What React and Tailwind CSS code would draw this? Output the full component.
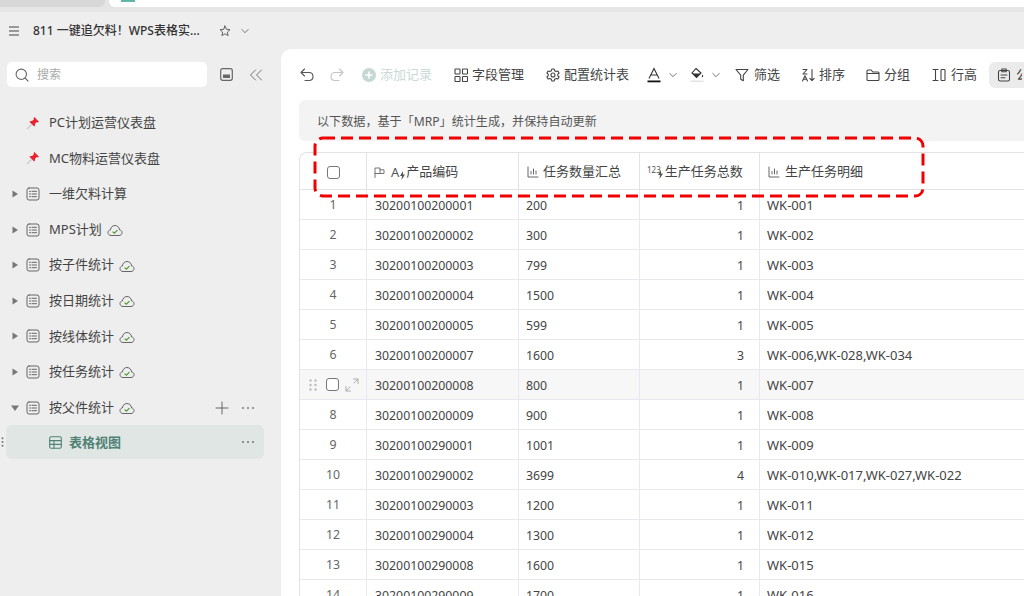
import React from "react";

const font = { fontFamily: '"Noto Sans","Noto Sans CJK SC",sans-serif' };

const S = ({ w = 16, h = 16, vb = "0 0 16 16", children, className = "", sw = 1.1, color = "currentColor" }) => (
  <svg width={w} height={h} viewBox={vb} fill="none" stroke={color} strokeWidth={sw} strokeLinecap="round" strokeLinejoin="round" className={`shrink-0 ${className}`}>
    {children}
  </svg>
);

const Pin = () => (
  <svg width="14" height="14" viewBox="0 0 14 14" className="shrink-0">
    <path d="M1 13 L5.5 8.5" stroke="#c9c9c9" strokeWidth="1.2" />
    <path d="M8.3 1 L13 5.7 L11.8 6.4 L10.8 6 L8.9 8 C9.2 9 8.9 10 8.2 10.6 L3.4 5.8 C4 5.1 5 4.8 6 5.1 L8 3.2 L7.6 2.2 Z" fill="#e8222e" />
  </svg>
);

const ListIcon = () => (
  <S w={14} h={14} vb="0 0 14 14" color="#666" sw={1}>
    <rect x="1" y="1" width="12" height="12" rx="2" />
    <path d="M3.5 4.3h1M6 4.3h4.5M3.5 7h1M6 7h4.5M3.5 9.7h1M6 9.7h4.5" />
  </S>
);

const Cloud = () => (
  <svg width="16" height="13" viewBox="0 0 16 13" fill="none" className="shrink-0 ml-[5px] mt-[2px]">
    <path d="M4 11.5 C2 11.5 1 10 1 8.6 C1 7.2 2 6 3.4 6 C3.7 3.2 5.6 1.5 8 1.5 C10.4 1.5 12.3 3.2 12.6 6 C14 6 15 7.2 15 8.6 C15 10 14 11.5 12 11.5 Z" stroke="#666" strokeWidth="1" />
    <path d="M5.6 7.6 L7.4 9.2 L10.4 6.2" stroke="#4c9a2a" strokeWidth="1.2" />
  </svg>
);

const Arrow = ({ down }) => (
  <svg width="8" height="8" viewBox="0 0 8 8" className="shrink-0">
    <path d={down ? "M0 1.5 H8 L4 7 Z" : "M1.5 0.5 L7 4 L1.5 7.5 Z"} fill="#777" />
  </svg>
);

const Dots = ({ cls = "" }) => (
  <svg width="14" height="4" viewBox="0 0 14 4" className={`shrink-0 ${cls}`}>
    <circle cx="2" cy="2" r="1" fill="#777" /><circle cx="7" cy="2" r="1" fill="#777" /><circle cx="12" cy="2" r="1" fill="#777" />
  </svg>
);

const Chevron = ({ cls = "" }) => (
  <S w={8} h={8} vb="0 0 8 8" color="#777" sw={1} className={cls}><path d="M0.8 2.5 L4 5.7 L7.2 2.5" /></S>
);

const side = [
  ["一维欠料计算", false],
  ["MPS计划", true],
  ["按子件统计", true],
  ["按日期统计", true],
  ["按线体统计", true],
  ["按任务统计", true],
];

const rows = [
  ["1", "30200100200001", "200", "1", "WK-001"],
  ["2", "30200100200002", "300", "1", "WK-002"],
  ["3", "30200100200003", "799", "1", "WK-003"],
  ["4", "30200100200004", "1500", "1", "WK-004"],
  ["5", "30200100200005", "599", "1", "WK-005"],
  ["6", "30200100200007", "1600", "3", "WK-006,WK-028,WK-034"],
  ["7", "30200100200008", "800", "1", "WK-007"],
  ["8", "30200100200009", "900", "1", "WK-008"],
  ["9", "30200100290001", "1001", "1", "WK-009"],
  ["10", "30200100290002", "3699", "4", "WK-010,WK-017,WK-027,WK-022"],
  ["11", "30200100290003", "1200", "1", "WK-011"],
  ["12", "30200100290004", "1300", "1", "WK-012"],
  ["13", "30200100290008", "1600", "1", "WK-015"],
  ["14", "30200100290009", "1700", "1", "WK-016"],
];

const Bars = () => (
  <S w={12} h={12} vb="0 0 12 12" color="#666" sw={1}>
    <path d="M1 1v10h10M4 8V5.5M6.5 8V3M9 8V5" />
  </S>
);

const Spark = () => (
  <svg width="7" height="9" viewBox="0 0 7 9" className="shrink-0"><path d="M4 0 L1 5 H3 L2.5 9 L6 3.6 H4 Z" fill="#555" /></svg>
);

const Box = () => <span className="block w-[13px] h-[13px] rounded-[3px] border border-[#777] bg-white" />;

function SideRow({ children, cls = "" }) {
  return <div className={`h-[35.6px] flex items-center text-[13px] text-[#444] ${cls}`}>{children}</div>;
}

function ToolText({ children, cls = "" }) {
  return <span className={`whitespace-nowrap text-[13px] text-[#444] ${cls}`}>{children}</span>;
}

export default function App() {
  return (
    <div style={font} className="relative w-[1024px] h-[596px] overflow-hidden bg-[#eeeeee] flex flex-col">
      {/* browser strip */}
      <div className="h-[12px] shrink-0 bg-[#e5e5e5] flex items-start gap-[4px]">
        <div className="w-[105px] h-[7px] bg-[#d8d8d8] rounded-br-[6px]" />
        <div className="flex-1 h-[7px] bg-white rounded-bl-[6px] pl-[12px]">
          <div className="w-[14px] h-[2px] bg-[#5fb8a5]" />
        </div>
      </div>

      {/* title */}
      <div className="h-[37px] shrink-0 flex items-center pl-[9px]">
        <S w={10} h={10} vb="0 0 10 10" color="#444" sw={1}><path d="M0 1h10M0 5h10M0 9h10" /></S>
        <span className="ml-[14px] text-[12px] font-medium text-[#333] whitespace-nowrap">811 一键追欠料！WPS表格实...</span>
        <S w={12} h={12} vb="0 0 12 12" color="#555" sw={0.9} className="ml-[19px]">
          <path d="M6 1 L7.5 4.3 L11 4.7 L8.4 7 L9.1 10.6 L6 8.8 L2.9 10.6 L3.6 7 L1 4.7 L4.5 4.3 Z" />
        </S>
        <Chevron cls="ml-[10px]" />
      </div>

      <div className="flex-1 flex min-h-0">
        {/* sidebar */}
        <aside className="w-[281px] shrink-0 relative">
          <div className="flex items-center pl-[7px] pt-[13px]">
            <div className="w-[200px] h-[25px] bg-white rounded-[5px] flex items-center pl-[8px]">
              <S w={14} h={14} vb="0 0 14 14" color="#666" sw={1.1}><circle cx="6.3" cy="6.3" r="5.2" /><path d="M10.2 10.2 L13 13" /></S>
              <span className="ml-[8px] text-[12px] text-[#aaa]">搜索</span>
            </div>
            <S w={13} h={13} vb="0 0 13 13" color="#666" sw={1.2} className="ml-[13px]">
              <rect x="0.7" y="0.7" width="11.6" height="11.6" rx="2" />
              <rect x="3" y="6.5" width="7" height="3.5" fill="#666" stroke="none" />
            </S>
            <S w={14} h={12} vb="0 0 14 12" color="#777" sw={1} className="ml-[16px]">
              <path d="M6.5 1 L1.5 6 L6.5 11M12.5 1 L7.5 6 L12.5 11" />
            </S>
          </div>

          <div className="mt-[18px]">
            {["PC计划运营仪表盘", "MC物料运营仪表盘"].map((t) => (
              <SideRow key={t} cls="pl-[26px]"><Pin /><span className="ml-[9px]">{t}</span></SideRow>
            ))}
            {side.map(([t, c]) => (
              <SideRow key={t} cls="pl-[11px]">
                <Arrow />
                <span className="ml-[7px]"><ListIcon /></span>
                <span className="ml-[9px]">{t}</span>
                {c && <Cloud />}
              </SideRow>
            ))}
            <SideRow cls="pl-[11px]">
              <Arrow down />
              <span className="ml-[7px]"><ListIcon /></span>
              <span className="ml-[9px]">按父件统计</span>
              <Cloud />
              <S w={14} h={14} vb="0 0 14 14" color="#666" sw={1} className="ml-[80px]"><path d="M7 1v12M1 7h12" /></S>
              <Dots cls="ml-[12px]" />
            </SideRow>
            <div className="relative ml-[6px] w-[258px] h-[34px] rounded-[6px] bg-[#e0e6e4] flex items-center pl-[43px]">
              <S w={13} h={13} vb="0 0 13 13" color="#4f8274" sw={1.1}>
                <rect x="0.7" y="0.7" width="11.6" height="11.6" rx="1.5" />
                <path d="M0.7 4.6h11.6M0.7 8.4h11.6M5 4.6v7.7" />
              </S>
              <span className="ml-[7px] text-[13px] font-bold text-[#4f8274]">表格视图</span>
              <Dots cls="ml-[120px]" />
              <svg width="3" height="10" viewBox="0 0 3 10" className="absolute left-[-5px] top-[12px]">
                <circle cx="1.5" cy="1.2" r="1" fill="#777" /><circle cx="1.5" cy="5" r="1" fill="#777" /><circle cx="1.5" cy="8.8" r="1" fill="#777" />
              </svg>
            </div>
          </div>
        </aside>

        {/* main */}
        <main className="flex-1 min-w-0 bg-white rounded-tl-[10px] overflow-hidden">
          {/* toolbar */}
          <div className="h-[51px] flex items-center whitespace-nowrap text-[#444]">
            <S color="#555" className="ml-[18px]"><path d="M5.5 2 L2 5.5 L5.5 9M2 5.5 H10 C12.5 5.5 14 7.4 14 9.5 C14 11.8 12.3 13.5 10 13.5 H6" /></S>
            <S color="#c4c4c4" className="ml-[14px]"><path d="M10.5 2 L14 5.5 L10.5 9M14 5.5 H6 C3.5 5.5 2 7.4 2 9.5 C2 11.8 3.7 13.5 6 13.5 H10" /></S>
            <svg width="14" height="14" viewBox="0 0 14 14" className="ml-[17px] shrink-0">
              <circle cx="7" cy="7" r="7" fill="#c5d8d3" /><path d="M7 3.5v7M3.5 7h7" stroke="#fff" strokeWidth="1.6" />
            </svg>
            <ToolText cls="ml-[4px] !text-[#c9dad5]">添加记录</ToolText>
            <S w={14} h={14} vb="0 0 14 14" color="#444" className="ml-[22px]">
              <rect x="1" y="1" width="5" height="5" rx="0.6" /><rect x="8.5" y="1" width="5" height="5" rx="0.6" /><rect x="1" y="8.5" width="5" height="5" rx="0.6" /><rect x="8.5" y="8.5" width="5" height="5" rx="0.6" />
            </S>
            <ToolText cls="ml-[4px]">字段管理</ToolText>
            <S w={14} h={14} vb="0 0 14 14" color="#444" className="ml-[22px]">
              <path d="M5.8 1 H8.2 L8.6 2.8 L10.2 3.6 L11.9 3 L13.1 5 L11.8 6.2 V7.8 L13.1 9 L11.9 11 L10.2 10.4 L8.6 11.2 L8.2 13 H5.8 L5.4 11.2 L3.8 10.4 L2.1 11 L0.9 9 L2.2 7.8 V6.2 L0.9 5 L2.1 3 L3.8 3.6 L5.4 2.8 Z" />
              <circle cx="7" cy="7" r="2" />
            </S>
            <ToolText cls="ml-[4px]">配置统计表</ToolText>
            <svg width="14" height="16" viewBox="0 0 14 16" fill="none" className="ml-[18px] shrink-0">
              <path d="M2 11.5 L7 1.5 L12 11.5M3.8 8 H10.2" stroke="#333" strokeWidth="1.1" />
              <rect x="0.5" y="13.5" width="13" height="1.8" fill="#111" />
            </svg>
            <Chevron cls="ml-[8px]" />
            <svg width="14" height="16" viewBox="0 0 14 16" fill="none" className="ml-[13px] shrink-0">
              <path d="M6 1.5 L11 6 L6.5 10.5 L2 6 Z" stroke="#333" strokeWidth="1.1" />
              <path d="M2.5 6.5 H10.5 L6.5 10.5 Z" fill="#333" />
              <path d="M12.5 7.5 C13.3 9 13.6 9.6 12.5 10.2 C11.5 9.6 11.7 9 12.5 7.5 Z" fill="#333" />
              <rect x="0.5" y="13.5" width="13" height="1.5" fill="#e4e4e4" />
            </svg>
            <Chevron cls="ml-[8px]" />
            <S w={14} h={14} vb="0 0 14 14" color="#444" className="ml-[15px]"><path d="M1 1.5 H13 L8.3 7.2 V12.8 L5.7 11.2 V7.2 Z" /></S>
            <ToolText cls="ml-[5px]">筛选</ToolText>
            <S w={14} h={14} vb="0 0 14 14" color="#444" className="ml-[21px]">
              <path d="M2 1.5 H6 L2 6 H6M1.5 13 L4 7.8 L6.5 13M2.5 11.2 H5.5M11 1.5 V12.5M8.8 10.3 L11 12.5 L13.2 10.3" />
            </S>
            <ToolText cls="ml-[4px]">排序</ToolText>
            <S w={14} h={14} vb="0 0 14 14" color="#444" className="ml-[21px]">
              <path d="M1 3 C1 2.4 1.4 2 2 2 H5.2 L6.8 4 H12 C12.6 4 13 4.4 13 5 V11.5 C13 12.1 12.6 12.5 12 12.5 H2 C1.4 12.5 1 12.1 1 11.5 Z M1 5.5 H13" />
            </S>
            <ToolText cls="ml-[4px]">分组</ToolText>
            <S w={14} h={14} vb="0 0 14 14" color="#444" className="ml-[22px]">
              <path d="M1 1.5 H6M1 12.5 H6M3.5 1.5 V12.5" /><rect x="9" y="1.5" width="4" height="11" rx="0.8" />
            </S>
            <ToolText cls="ml-[5px]">行高</ToolText>
            <div className="ml-[12px] h-[26px] flex-1 rounded-l-[6px] bg-[#ebebeb] flex items-center pl-[8px] overflow-hidden">
              <S w={14} h={14} vb="0 0 14 14" color="#444">
                <rect x="1.5" y="2.5" width="11" height="10.5" rx="1.5" /><path d="M4.8 1 H9.2 V3.8 H4.8 Z M4 7 H10 M4 9.8 H8" />
              </S>
              <span className="ml-[5px] w-[6px] overflow-hidden whitespace-nowrap text-[13px] text-[#444]">公式</span>
            </div>
          </div>

          {/* notice */}
          <div className="ml-[18px] h-[41px] rounded-l-[6px] bg-[#f3f3f3] flex items-center pl-[18px] pt-[4px] text-[12.1px] text-[#555] whitespace-nowrap">
            以下数据，基于「MRP」统计生成，并保持自动更新
          </div>

          {/* table */}
          <div className="ml-[18px] mt-[11px] border-l border-t border-[#e3e3e3] rounded-tl-[8px]">
            <div className="h-[37px] grid grid-cols-[67px_152px_121px_120px_1fr] border-b border-[#e3e3e3] text-[13px] text-[#444]">
              <div className="border-r border-[#e3e3e3] flex items-center justify-center pt-[2px]"><Box /></div>
              <div className="border-r border-[#e3e3e3] flex items-center pl-[7px] pt-[2px]">
                <S w={11} h={11} vb="0 0 11 11" color="#666" sw={0.9}><path d="M1 10.5 V1 H6 V6.5 H1 M6 2.8 H10 V6.5 H6" /></S>
                <span className="ml-[6px] text-[13px] leading-none text-[#555]">A</span>
                <span className="mt-[6px]"><Spark /></span>
                <span>产品编码</span>
              </div>
              <div className="border-r border-[#e3e3e3] flex items-center pl-[8px] pt-[2px]"><Bars /><span className="ml-[4px]">任务数量汇总</span></div>
              <div className="border-r border-[#e3e3e3] flex items-center pl-[7px] pt-[2px]">
                <span className="text-[8px] leading-none mb-[4px] text-[#555]">123</span>
                <span className="mt-[5px] -ml-[4px]"><Spark /></span>
                <span className="ml-[1px]">生产任务总数</span>
              </div>
              <div className="flex items-center pl-[8px] pt-[2px]"><Bars /><span className="ml-[5px]">生产任务明细</span></div>
            </div>
            {rows.map((r) => {
              const hover = r[0] === "7";
              return (
                <div key={r[0]} className={`h-[30px] grid grid-cols-[67px_152px_121px_120px_1fr] border-b border-[#e8e8ee] text-[12.3px] text-[#444] ${hover ? "bg-[#f7f7f7]" : ""}`}>
                  <div className={`border-r border-[#e8e8ee] flex items-center justify-center text-[#666] ${hover ? "" : "pt-[1px]"}`}>
                    {hover ? (
                      <div className="flex items-center pl-[2px]">
                        <svg width="8" height="12" viewBox="0 0 8 12" className="shrink-0">
                          {[1.5, 6, 10.5].map((y) => (
                            <g key={y}><circle cx="1.5" cy={y} r="1.2" fill="#bbb" /><circle cx="6.5" cy={y} r="1.2" fill="#bbb" /></g>
                          ))}
                        </svg>
                        <span className="ml-[9px]"><Box /></span>
                        <S w={14} h={14} vb="0 0 14 14" color="#aaa" sw={1} className="ml-[6px]"><path d="M8.5 1 H13 V5.5M13 1 L9 5M5.5 13 H1 V8.5M1 13 L5 9" /></S>
                      </div>
                    ) : r[0]}
                  </div>
                  <div className="border-r border-[#e8e8ee] flex items-center pl-[8px] pt-[3px]">{r[1]}</div>
                  <div className="border-r border-[#e8e8ee] flex items-center pl-[7px] pt-[3px]">{r[2]}</div>
                  <div className="border-r border-[#e8e8ee] flex items-center justify-end pr-[15px] pt-[3px]">{r[3]}</div>
                  <div className="flex items-center pl-[7px] pt-[2px] whitespace-nowrap text-[13px]">{r[4]}</div>
                </div>
              );
            })}
          </div>
        </main>
      </div>

      {/* red annotation */}
      <svg width="614" height="64" viewBox="0 0 614 64" fill="none" className="absolute left-[312px] top-[135px] pointer-events-none">
        <rect x="3" y="3" width="608" height="58" rx="8" stroke="#f00000" strokeWidth="3" strokeDasharray="12 6" />
      </svg>
    </div>
  );
}
